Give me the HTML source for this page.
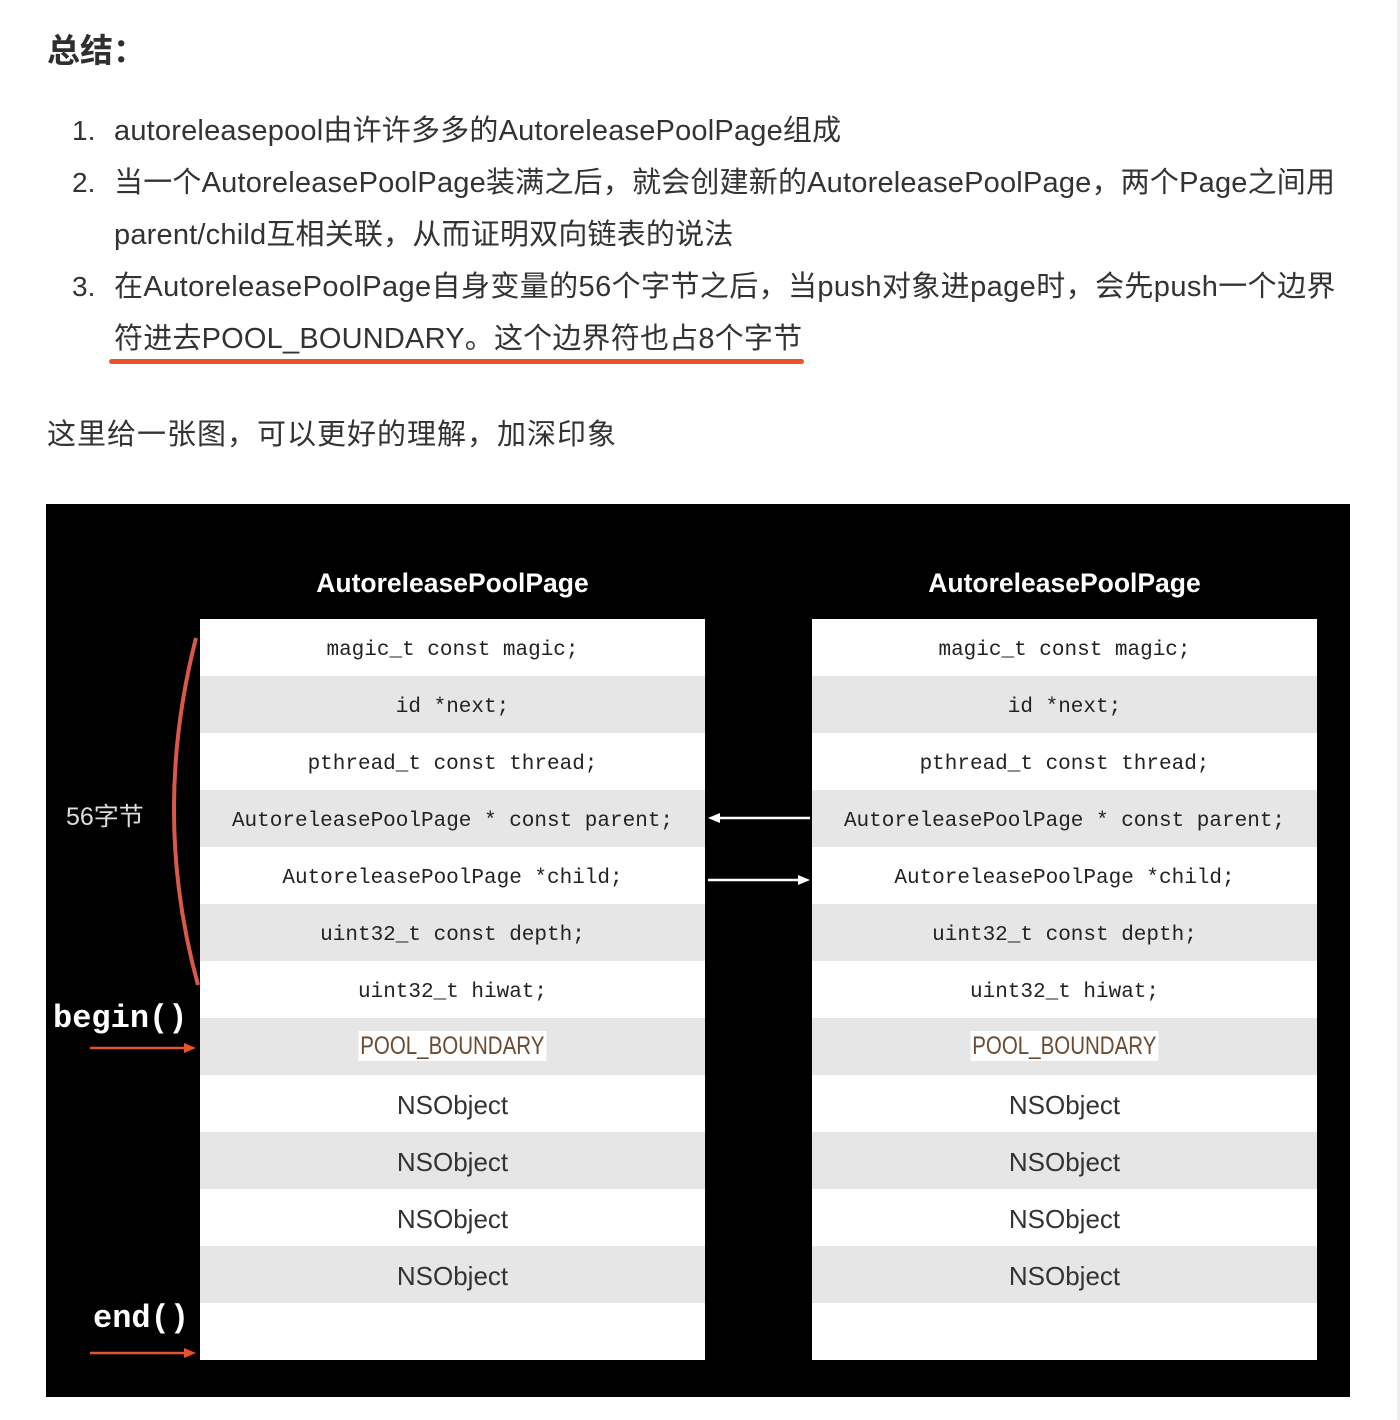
<!DOCTYPE html>
<html><head><meta charset="utf-8"><style>
body{margin:0;background:#fff;width:1400px;height:1420px;position:relative;overflow:hidden;font-family:"Liberation Sans","Noto Sans CJK SC",sans-serif;color:#333}
.h{position:absolute;left:47px;top:24px;font-size:33px;font-weight:bold;color:#2f2f2f}
.l{position:absolute;font-size:29px;line-height:52px;color:#333;white-space:nowrap;letter-spacing:0.2px}
.n{position:absolute;left:72px;font-size:28px;line-height:52px}
.box{position:absolute;left:46px;top:504px;width:1304px;height:893px;background:#000}
.t{position:absolute;top:115px;width:505px}
.t div{height:57px;line-height:63px;text-align:center;font-family:"Liberation Mono",monospace;font-size:21px;color:#222;background:#fff}
.t div:nth-child(even){background:#e6e6e7}
.t div.ns{font-family:"Liberation Sans",sans-serif;font-size:26px;color:#333;line-height:60px}
.tt{position:absolute;top:64px;width:505px;text-align:center;color:#fff;font-weight:bold;font-size:26.5px}
.pb{display:inline-block;transform:scaleX(0.82);background:#fff;color:#6b4a32;font-family:"Liberation Sans",sans-serif;font-size:25px;line-height:30px;padding:0 2px}
</style></head><body>
<div style="position:absolute;right:0;top:0;width:3px;height:1420px;background:#eee"></div>
<div class="h">总结：</div>
<div class="n" style="top:105px">1.</div>
<div class="l" style="left:114px;top:105px">autoreleasepool由许许多多的AutoreleasePoolPage组成</div>
<div class="n" style="top:157px">2.</div>
<div class="l" style="left:114px;top:157px">当一个AutoreleasePoolPage装满之后，就会创建新的AutoreleasePoolPage，两个Page之间用</div>
<div class="l" style="left:114px;top:209px">parent/child互相关联，从而证明双向链表的说法</div>
<div class="n" style="top:261px">3.</div>
<div class="l" style="left:114px;top:261px;letter-spacing:0.4px">在AutoreleasePoolPage自身变量的56个字节之后，当push对象进page时，会先push一个边界</div>
<div class="l" style="left:114px;top:313px">符进去POOL_BOUNDARY。这个边界符也占8个字节</div>
<div style="position:absolute;left:109px;top:359px;width:695px;height:5px;border-radius:3px;background:#e8542c"></div>
<div class="l" style="left:47px;top:409px;letter-spacing:1px">这里给一张图，可以更好的理解，加深印象</div>
<div class="box">
<div class="tt" style="left:154px">AutoreleasePoolPage</div>
<div class="tt" style="left:766px">AutoreleasePoolPage</div>
<div class="t" style="left:154px">
<div>magic_t const magic;</div><div>id *next;</div><div>pthread_t const thread;</div><div>AutoreleasePoolPage * const parent;</div><div>AutoreleasePoolPage *child;</div><div>uint32_t const depth;</div><div>uint32_t hiwat;</div><div><span class="pb">POOL_BOUNDARY</span></div><div class="ns">NSObject</div><div class="ns">NSObject</div><div class="ns">NSObject</div><div class="ns">NSObject</div><div></div>
</div>
<div class="t" style="left:766px">
<div>magic_t const magic;</div><div>id *next;</div><div>pthread_t const thread;</div><div>AutoreleasePoolPage * const parent;</div><div>AutoreleasePoolPage *child;</div><div>uint32_t const depth;</div><div>uint32_t hiwat;</div><div><span class="pb">POOL_BOUNDARY</span></div><div class="ns">NSObject</div><div class="ns">NSObject</div><div class="ns">NSObject</div><div class="ns">NSObject</div><div></div>
</div>
<div style="position:absolute;left:20px;top:293px;color:#ddd;font-size:25px">56字节</div>
<div style="position:absolute;left:7px;top:496px;color:#fff;font-family:'Liberation Mono',monospace;font-weight:bold;font-size:32px">begin()</div>
<div style="position:absolute;left:47px;top:796px;color:#fff;font-family:'Liberation Mono',monospace;font-weight:bold;font-size:32px">end()</div>
<svg width="1304" height="893" style="position:absolute;left:0;top:0">
<path d="M150 134 Q105 310 152 481" fill="none" stroke="#d9584a" stroke-width="4"/>
<path d="M44 544 H146" stroke="#e8542c" stroke-width="2.5"/><path d="M138 539 L150 544 L138 549Z" fill="#e8542c"/>
<path d="M44 849 H146" stroke="#e8542c" stroke-width="2.5"/><path d="M138 844 L150 849 L138 854Z" fill="#e8542c"/>
<path d="M764 314 H668" stroke="#fff" stroke-width="2.5"/><path d="M674 309 L662 314 L674 319Z" fill="#fff"/>
<path d="M662 376 H758" stroke="#fff" stroke-width="2.5"/><path d="M752 371 L764 376 L752 381Z" fill="#fff"/>
</svg>
</div>
</body></html>
